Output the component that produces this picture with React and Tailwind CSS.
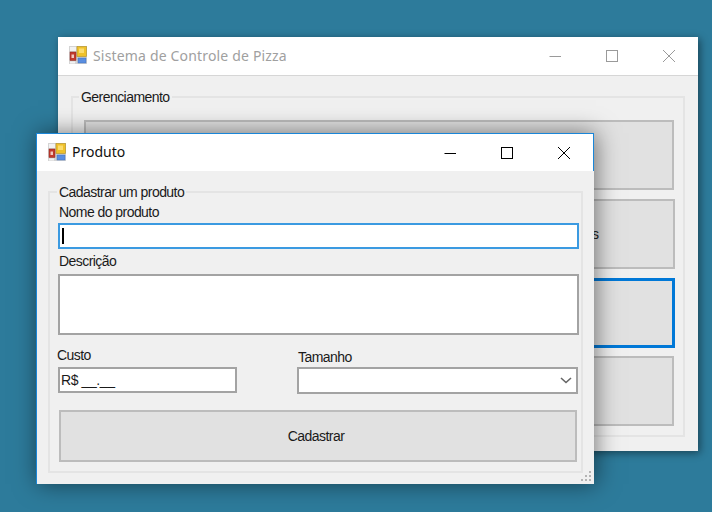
const IconApp = () => (
  <svg width="18" height="18" viewBox="0 0 18 18" className="shrink-0">
    <rect x="0" y="0" width="18" height="18" fill="#d4d4d4" />
    <rect x="1" y="1" width="6" height="4" fill="#f2f2f2" />
    <rect x="8" y="0.5" width="9.5" height="10" fill="#efc12a" stroke="#b8962e" strokeWidth="0.7" />
    <rect x="10" y="2.5" width="5" height="4.5" fill="#fbdc6e" />
    <rect x="1" y="6" width="6" height="8.5" fill="#c13a2e" stroke="#8c2a20" strokeWidth="0.5" />
    <rect x="2.5" y="8.5" width="2.5" height="3.5" fill="#f0c8c0" />
    <rect x="9" y="12" width="8" height="5" fill="#5a8ee0" stroke="#3f6cb8" strokeWidth="0.5" />
    <rect x="1" y="15.5" width="5" height="2" fill="#f2f2f2" />
  </svg>
);

const WinControls = ({ color }) => (
  <div className="flex items-center">
    <svg width="14" height="14" viewBox="0 0 14 14" className="mr-[43px]"><path d="M1.5 7.5H13" stroke={color} strokeWidth="1" fill="none" /></svg>
    <svg width="14" height="14" viewBox="0 0 14 14" className="mr-[43px]"><rect x="1.5" y="1.5" width="11" height="11" stroke={color} strokeWidth="1" fill="none" /></svg>
    <svg width="14" height="14" viewBox="0 0 14 14"><path d="M1 1L13 13M13 1L1 13" stroke={color} strokeWidth="1" fill="none" /></svg>
  </div>
);

const labelFont = { fontFamily: '"Liberation Sans", Arial, sans-serif' };

function BackButton({ className = "", children }) {
  return (
    <div className={`h-[70px] bg-[#e1e1e1] border-2 border-[#bcbcbc] flex items-center justify-end text-[14px] text-[#222] ${className}`}>
      {children}
    </div>
  );
}

export default function App() {
  return (
    <div
      className="relative w-[712px] h-[512px] overflow-hidden bg-[#2d7b9b] text-[14px] text-[#1a1a1a]"
      style={labelFont}
    >
      {/* Rear window */}
      <div className="absolute left-[58px] top-[37px] w-[640px] h-[414px] bg-[#f0f0f0] flex flex-col shadow-[2px_2px_8px_rgba(0,0,0,0.45)]">
        <div className="h-[39px] shrink-0 bg-white border-b border-[#d6d6d6] flex items-center pl-[11px] pr-[22px] pb-[2px]">
          <IconApp />
          <span className="ml-[6px] text-[14px] text-[#a0a0a0] tracking-[0.17px]" style={{ fontFamily: '"Noto Sans", sans-serif' }}>Sistema de Controle de Pizza</span>
          <div className="ml-auto pt-[2px]"><WinControls color="#9a9a9a" /></div>
        </div>
        <fieldset className="mx-[13px] mt-[13px] h-[348px] border-2 border-[#e4e4e4] pl-[11px] pr-[9px]">
          <legend className="-ml-[5px] px-[2px] leading-[16px] text-[14px] tracking-[-0.55px]">Gerenciamento</legend>
          <div className="mt-[15px] flex flex-col gap-[9px]">
            <BackButton />
            <BackButton className="-mr-[1px] pr-[74px]">s</BackButton>
            <BackButton className="!border-[3px] !border-[#0078d7] -mr-[1px]" />
            <BackButton className="-mt-[1px]" />
          </div>
        </fieldset>
      </div>

      {/* Front window */}
      <div className="absolute left-[36px] top-[133px] w-[558px] h-[351px] bg-[#f0f0f0] flex flex-col shadow-[2px_0_22px_rgba(0,0,0,0.5)]">
        <div className="h-[38px] shrink-0 bg-white border border-b-0 border-[#1a86d8] flex items-center pl-[11px] pr-[22px] pb-[2px]">
          <IconApp />
          <span className="ml-[6px] text-[14px] text-[#111]" style={{ fontFamily: '"Noto Sans", sans-serif' }}>Produto</span>
          <div className="ml-auto pt-[2px]"><WinControls color="#000" /></div>
        </div>
        <div className="relative flex-1 border-l border-[#1a86d8] pl-[11px] pr-[11px]">
          <fieldset className="mt-[13px] h-[289px] border-2 border-[#e4e4e4] pl-[8px] pr-[2px]">
            <legend className="-ml-[1px] px-[2px] leading-[16px] tracking-[-0.55px]">Cadastrar um produto</legend>
            <div className="ml-[1px] leading-[16px] tracking-[-0.55px] mt-[4px]">Nome do produto</div>
            <div className="mt-[3px] h-[26px] bg-white border-2 border-[#3b9ae1] flex items-center pl-[2px]">
              <div className="w-[2px] h-[16px] bg-black" />
            </div>
            <div className="ml-[1px] mt-[4px] leading-[16px] tracking-[-0.55px]">Descrição</div>
            <div className="mt-[5px] h-[61px] bg-white border-2 border-[#a3a3a3]" />
            <div className="flex mt-[12px]">
              <div className="w-[180px] -ml-[1px]">
                <div className="h-[20px] leading-[16px] tracking-[-0.55px]">Custo</div>
                <div className="ml-[1px] h-[26px] bg-white border-2 border-[#a3a3a3] flex items-center pl-[1px] text-[14px] tracking-[-0.4px]">R$ __.__</div>
              </div>
              <div className="ml-[60px] w-[281px]">
                <div className="ml-[1px] h-[19px] mt-[2px] -mb-[1px] leading-[16px] tracking-[-0.55px]">Tamanho</div>
                <div className="h-[27px] bg-white border-2 border-[#a3a3a3] flex items-center justify-end pr-[4px]">
                  <svg width="12" height="7" viewBox="0 0 12 7"><path d="M1 1L6 5.5L11 1" stroke="#666" strokeWidth="1.6" fill="none" /></svg>
                </div>
              </div>
            </div>
            <div className="mt-[16px] ml-[1px] mr-[2px] h-[52px] bg-[#e1e1e1] border-2 border-[#bcbcbc] flex items-center justify-center pr-[4px] tracking-[-0.55px]">Cadastrar</div>
          </fieldset>
          {/* resize grip */}
          <svg width="12" height="12" viewBox="0 0 12 12" className="absolute right-[1px] bottom-[1px]">
            <g fill="#b4b4b4">
              <rect x="8" y="0" width="2" height="2" />
              <rect x="4" y="4" width="2" height="2" /><rect x="8" y="4" width="2" height="2" />
              <rect x="0" y="8" width="2" height="2" /><rect x="4" y="8" width="2" height="2" /><rect x="8" y="8" width="2" height="2" />
            </g>
          </svg>
        </div>
      </div>
    </div>
  );
}
